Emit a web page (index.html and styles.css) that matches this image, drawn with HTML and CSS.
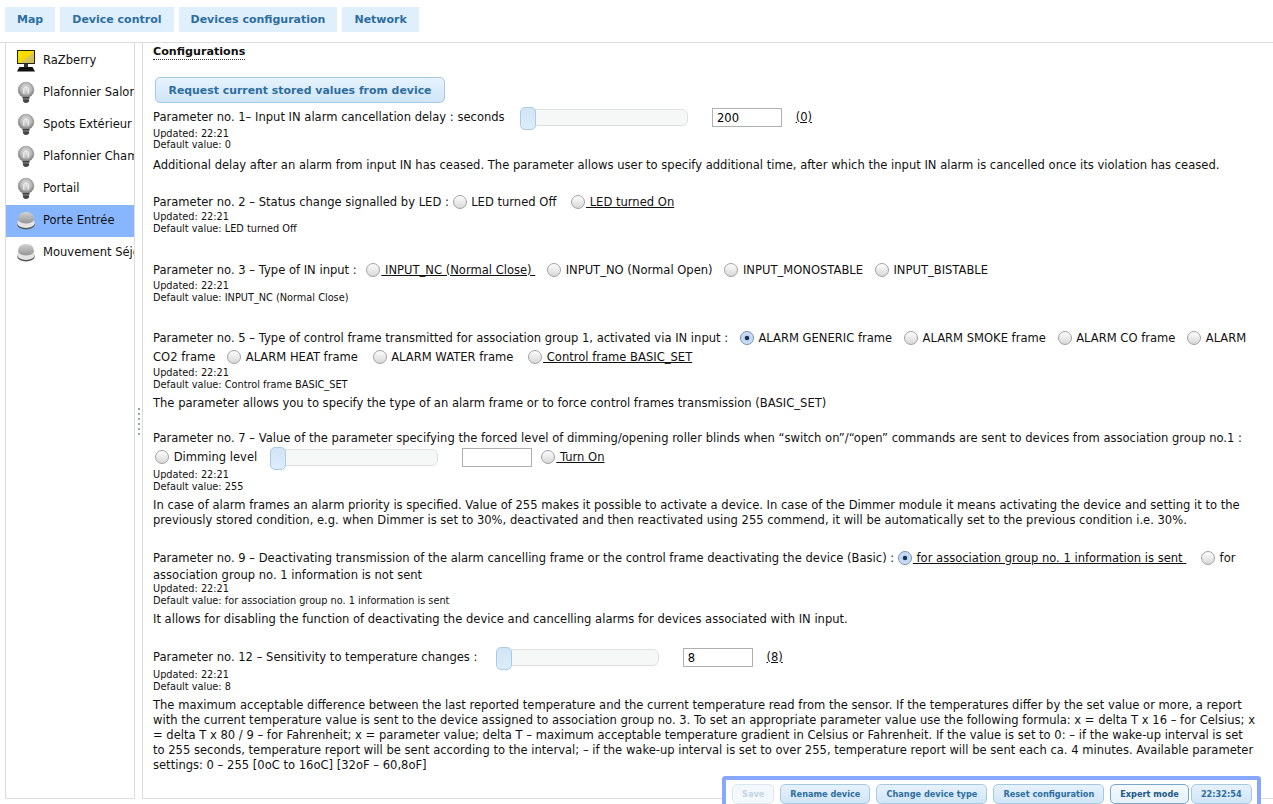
FILE: index.html
```html
<!DOCTYPE html>
<html lang="en">
<head>
    <meta charset="UTF-8">
    <title>Z-Wave Configuration</title>
    <link rel="stylesheet" href="styles.css">
</head>
<body>

<svg class="defs" width="0" height="0">
    <defs>
        <radialGradient id="bulbGlass" cx="0.5" cy="0.4" r="0.6">
            <stop offset="0" stop-color="#e2e2e2"/>
            <stop offset="0.55" stop-color="#bcbcbc"/>
            <stop offset="1" stop-color="#757575"/>
        </radialGradient>
        <linearGradient id="domeTop" x1="0" y1="0" x2="0" y2="1">
            <stop offset="0" stop-color="#d2d2d2"/>
            <stop offset="1" stop-color="#959595"/>
        </linearGradient>
        <linearGradient id="screen" x1="0" y1="0" x2="1" y2="1">
            <stop offset="0" stop-color="#ffe600"/>
            <stop offset="0.55" stop-color="#f5d800"/>
            <stop offset="0.56" stop-color="#d9c65a"/>
            <stop offset="1" stop-color="#c8b860"/>
        </linearGradient>
        <symbol id="bulb" viewBox="0 0 18 22">
            <circle cx="9" cy="8" r="7.8" fill="url(#bulbGlass)" stroke="#8a8a8a" stroke-width="0.6"/>
            <path d="M6.8 12 V6.5 Q9 3 11.2 6.5 V12" fill="none" stroke="#f4f4f4" stroke-width="1"/>
            <path d="M5.5 15 H12.5 L11.8 19.5 Q9 22.5 6.2 19.5 Z" fill="#444"/>
            <path d="M5.8 17 H12.2" stroke="#aaa" stroke-width="0.7"/>
        </symbol>
        <symbol id="dome" viewBox="0 0 18 22">
            <ellipse cx="9" cy="14.5" rx="8.8" ry="5" fill="#555"/>
            <ellipse cx="9" cy="13" rx="8.8" ry="5" fill="#e4e4e4"/>
            <path d="M1 10 C1 4 4.5 2 9 2 C13.5 2 17 4 17 10 C15 14.5 3 14.5 1 10 Z" fill="url(#domeTop)"/>
        </symbol>
        <symbol id="monitor" viewBox="0 0 18 22">
            <rect x="0" y="0" width="18" height="14" fill="#222"/>
            <rect x="1" y="1" width="16" height="12" fill="url(#screen)"/>
            <rect x="7" y="14" width="4" height="3" fill="#333"/>
            <path d="M2.5 17 H15.5 L18 21.5 H0 Z" fill="#111"/>
        </symbol>
    </defs>
</svg>

<nav class="tabs">
    <a class="tab">Map</a>
    <a class="tab">Device control</a>
    <a class="tab">Devices configuration</a>
    <a class="tab">Network</a>
</nav>

<div class="layout">
    <aside class="sidebar">
        <div class="device"><svg class="device-icon"><use href="#monitor"/></svg><span>RaZberry</span></div>
        <div class="device"><svg class="device-icon"><use href="#bulb"/></svg><span>Plafonnier Salon</span></div>
        <div class="device"><svg class="device-icon"><use href="#bulb"/></svg><span>Spots Extérieur</span></div>
        <div class="device"><svg class="device-icon"><use href="#bulb"/></svg><span>Plafonnier Chambre</span></div>
        <div class="device"><svg class="device-icon"><use href="#bulb"/></svg><span>Portail</span></div>
        <div class="device selected"><svg class="device-icon"><use href="#dome"/></svg><span>Porte Entrée</span></div>
        <div class="device"><svg class="device-icon"><use href="#dome"/></svg><span>Mouvement Séjour</span></div>
    </aside>

    <div class="splitter"><div class="grip"></div></div>

    <main class="content">
        <h3 class="title">Configurations</h3>
        <button type="button" class="btn-request">Request current stored values from device</button>

        <section class="param p1">
            <div class="param-line">Parameter no. 1– Input IN alarm cancellation delay : seconds
                <span class="slider"><span class="handle"></span></span>
                <input class="num" type="text" value="200">
                <u class="reset">(0)</u>
            </div>
            <div class="meta">Updated: 22:21<br>Default value: 0</div>
            <p class="desc">Additional delay after an alarm from input IN has ceased. The parameter allows user to specify additional time, after which the input IN alarm is cancelled once its violation has ceased.</p>
        </section>

        <section class="param p2">
            <div class="param-line">Parameter no. 2 – Status change signalled by LED :
                <label class="opt tight"><input type="radio" name="p2"> LED turned Off</label>
                <label class="opt wide"><input type="radio" name="p2"><u>&nbsp;LED turned On</u></label>
            </div>
            <div class="meta">Updated: 22:21<br>Default value: LED turned Off</div>
        </section>

        <section class="param p3">
            <div class="param-line">Parameter no. 3 – Type of IN input :
                <label class="opt first"><input type="radio" name="p3"><u>&nbsp;INPUT_NC (Normal Close)&nbsp;</u></label>
                <label class="opt"><input type="radio" name="p3"> INPUT_NO (Normal Open)</label>
                <label class="opt"><input type="radio" name="p3"> INPUT_MONOSTABLE</label>
                <label class="opt"><input type="radio" name="p3"> INPUT_BISTABLE</label>
            </div>
            <div class="meta">Updated: 22:21<br>Default value: INPUT_NC (Normal Close)</div>
        </section>

        <section class="param p5">
            <div class="param-line">Parameter no. 5 – Type of control frame transmitted for association group 1, activated via IN input :
                <label class="opt"><input type="radio" name="p5" checked> ALARM GENERIC frame</label>
                <label class="opt"><input type="radio" name="p5"> ALARM SMOKE frame</label>
                <label class="opt"><input type="radio" name="p5"> ALARM CO frame</label>
                <label class="opt"><input type="radio" name="p5"> ALARM CO2 frame</label>
                <label class="opt"><input type="radio" name="p5"> ALARM HEAT frame</label>
                <label class="opt wide"><input type="radio" name="p5"> ALARM WATER frame</label>
                <label class="opt wide"><input type="radio" name="p5"><u>&nbsp;Control frame BASIC_SET</u></label>
            </div>
            <div class="meta">Updated: 22:21<br>Default value: Control frame BASIC_SET</div>
            <p class="desc">The parameter allows you to specify the type of an alarm frame or to force control frames transmission (BASIC_SET)</p>
        </section>

        <section class="param p7">
            <div class="param-line">Parameter no. 7 – Value of the parameter specifying the forced level of dimming/opening roller blinds when “switch on”/“open” commands are sent to devices from association group no.1 :<br>
                <label class="opt start"><input type="radio" name="p7"> Dimming level</label>
                <span class="slider"><span class="handle"></span></span>
                <input class="num" type="text">
                <label class="opt first"><input type="radio" name="p7"><u>&nbsp;Turn On</u></label>
            </div>
            <div class="meta">Updated: 22:21<br>Default value: 255</div>
            <p class="desc">In case of alarm frames an alarm priority is specified. Value of 255 makes it possible to activate a device. In case of the Dimmer module it means activating the device and setting it to the previously stored condition, e.g. when Dimmer is set to 30%, deactivated and then reactivated using 255 commend, it will be automatically set to the previous condition i.e. 30%.</p>
        </section>

        <section class="param p9">
            <div class="param-line">Parameter no. 9 – Deactivating transmission of the alarm cancelling frame or the control frame deactivating the device (Basic) :
                <label class="opt tight"><input type="radio" name="p9" checked><u>&nbsp;for association group no. 1 information is sent&nbsp;</u></label>
                <label class="opt wide"><input type="radio" name="p9"> for association group no. 1 information is not sent</label>
            </div>
            <div class="meta">Updated: 22:21<br>Default value: for association group no. 1 information is sent</div>
            <p class="desc">It allows for disabling the function of deactivating the device and cancelling alarms for devices associated with IN input.</p>
        </section>

        <section class="param p12">
            <div class="param-line">Parameter no. 12 – Sensitivity to temperature changes :
                <span class="slider"><span class="handle"></span></span>
                <input class="num" type="text" value="8">
                <u class="reset">(8)</u>
            </div>
            <div class="meta">Updated: 22:21<br>Default value: 8</div>
            <p class="desc">The maximum acceptable difference between the last reported temperature and the current temperature read from the sensor. If the temperatures differ by the set value or more, a report with the current temperature value is sent to the device assigned to association group no. 3. To set an appropriate parameter value use the following formula: x = delta T x 16 – for Celsius; x = delta T x 80 / 9 – for Fahrenheit; x = parameter value; delta T – maximum acceptable temperature gradient in Celsius or Fahrenheit. If the value is set to 0: – if the wake-up interval is set<br>to 255 seconds, temperature report will be sent according to the interval; – if the wake-up interval is set to over 255, temperature report will be sent each ca. 4 minutes. Available parameter settings: 0 – 255 [0oC to 16oC] [32oF – 60,8oF]</p>
        </section>
    </main>
</div>

<div class="actions">
    <button type="button" class="btn disabled">Save</button>
    <button type="button" class="btn">Rename device</button>
    <button type="button" class="btn">Change device type</button>
    <button type="button" class="btn">Reset configuration</button>
    <button type="button" class="btn expert">Expert mode</button>
    <button type="button" class="btn clock">22:32:54</button>
</div>

</body>
</html>
```

FILE: styles.css
```css
html, body {
    height: 100%;
}
body {
    margin: 0;
    overflow: hidden;
    font-family: 'DejaVu Sans', sans-serif;
    font-size: 11.55px;
    color: #111;
    background-color: #fff;
}
.defs {
    position: absolute;
}
.tabs {
    display: flex;
    gap: 5px;
    height: 25px;
    padding: 7px 0 10px 5px;
    border-bottom: 1px solid #ddd;
}
.tab {
    display: block;
    padding: 0 12px;
    line-height: 25px;
    font-size: 11px;
    font-weight: bold;
    color: #2e6e9e;
    background-color: #dfeffc;
}
.layout {
    display: flex;
    height: 756px;
    padding-left: 5px;
}
.sidebar {
    width: 128px;
    padding-top: 2px;
    border: 1px solid #ddd;
    border-top: 0;
    overflow: hidden;
}
.device {
    display: flex;
    align-items: center;
    gap: 8px;
    height: 32px;
    padding-left: 11px;
    white-space: nowrap;
}
.device span {
    padding-bottom: 3px;
}
.device.selected {
    background-color: #87b6ff;
}
.device-icon {
    flex: none;
    width: 18px;
    height: 22px;
}
.splitter {
    display: flex;
    flex-direction: column;
    align-items: center;
    justify-content: center;
    box-sizing: border-box;
    width: 7px;
    padding-left: 1px;
}
.grip {
    width: 2px;
    height: 30px;
    margin-top: 4px;
    background: repeating-linear-gradient(#93a5b5 0, #93a5b5 2px, transparent 2px, transparent 5px);
}
.content {
    flex: 1;
    padding: 0 10px;
    border-left: 1px solid #ddd;
    border-bottom: 1px solid #ddd;
    overflow: hidden;
}
.title {
    display: inline-block;
    margin: 1px 0 0;
    font-size: 11.15px;
    line-height: 15px;
    border-bottom: 1px dotted #333;
}
.btn-request {
    display: block;
    width: 290px;
    height: 26px;
    margin: 17px 0 0 2px;
    padding: 0;
    font: bold 10.9px 'DejaVu Sans', sans-serif;
    color: #2e6e9e;
    background: linear-gradient(#e6f3fd, #cfe5f7);
    border: 1px solid #a6c9e2;
    border-radius: 5px;
}
.param-line {
    line-height: 19px;
}
.meta {
    font-size: 9.75px;
    line-height: 12px;
}
.desc {
    margin: 5px 0 0;
    line-height: 15px;
}
.p1 { margin-top: 5px; }
.p1 .meta { margin-top: 1px; line-height: 11px; }
.p1 .desc { margin-top: 8px; }
.p2 { margin-top: 20px; }
.p2 .meta { margin-top: -1px; }
.p3 { margin-top: 26px; }
.p5 { margin-top: 25px; }
.p7 { margin-top: 18px; }
.p7 .meta { margin-top: 2px; }
.p7 .slider { margin-left: 9px; }
.p9 { margin-top: 22px; }
.p9 .param-line { line-height: 17px; }
.p9 .meta { margin-top: -1px; }
.p12 { margin-top: 21px; }
.p12 .meta { margin-top: 2px; }
.p12 .slider { width: 161px; margin-left: 15px; }
.opt {
    margin-left: 8px;
}
.opt.first {
    margin-left: 6px;
}
.opt.start {
    margin-left: 2px;
}
.opt.tight {
    margin-left: 0;
}
.opt.wide {
    margin-left: 11px;
}
input[type="radio"] {
    appearance: none;
    display: inline-block;
    vertical-align: -3px;
    width: 14px;
    height: 14px;
    margin: 0 1px 0 0;
    border: 1px solid #a2a2a2;
    border-radius: 50%;
    background: linear-gradient(#fdfdfd, #d8d8d8);
}
input[type="radio"]:checked {
    background: radial-gradient(circle, #16304f 1.8px, #bcd4f0 2.6px, #dfeafa);
    border-color: #6f8fb5;
}
.slider {
    position: relative;
    display: inline-block;
    vertical-align: middle;
    width: 166px;
    height: 15px;
    margin-left: 12px;
    background-color: #f6f8f8;
    border: 1px solid #e0e0e0;
    border-radius: 6px;
}
.handle {
    position: absolute;
    left: -1px;
    top: -3px;
    width: 14px;
    height: 21px;
    background: linear-gradient(#d2e5f6, #dcecfa);
    border: 1px solid #a9cbe6;
    border-radius: 5px;
}
.num {
    box-sizing: border-box;
    width: 70px;
    height: 19px;
    margin-left: 20px;
    padding: 0 4px;
    font: 11.55px 'DejaVu Sans', sans-serif;
    vertical-align: middle;
    border: 1px solid #b0b0b0;
}
.reset {
    margin-left: 10px;
}
.actions {
    position: fixed;
    left: 722px;
    bottom: 0;
    display: flex;
    gap: 6px;
    width: 520px;
    height: 20px;
    padding: 4px 5px 0 6px;
    background-color: #fff;
    border: 4px solid #88a8ff;
    border-bottom: 0;
    border-radius: 4px 4px 0 0;
    overflow: hidden;
}
.btn {
    flex: none;
    height: 20px;
    padding: 0 9px;
    font: bold 8.2px 'DejaVu Sans', sans-serif;
    color: #2e6e9e;
    background: linear-gradient(#e6f2fc, #d0e5f6);
    border: 1px solid #a6c9e2;
    border-radius: 5px;
    white-space: nowrap;
}
.btn.disabled {
    color: #c4d4e0;
    background: #f3f8fc;
    border-color: #dbe8f2;
}
.btn.expert {
    color: #1d5987;
    background: linear-gradient(#f4f9fd, #e6f1fa);
    border-color: #79a7c9;
}
.btn.clock {
    margin-left: -4px;
}
```
